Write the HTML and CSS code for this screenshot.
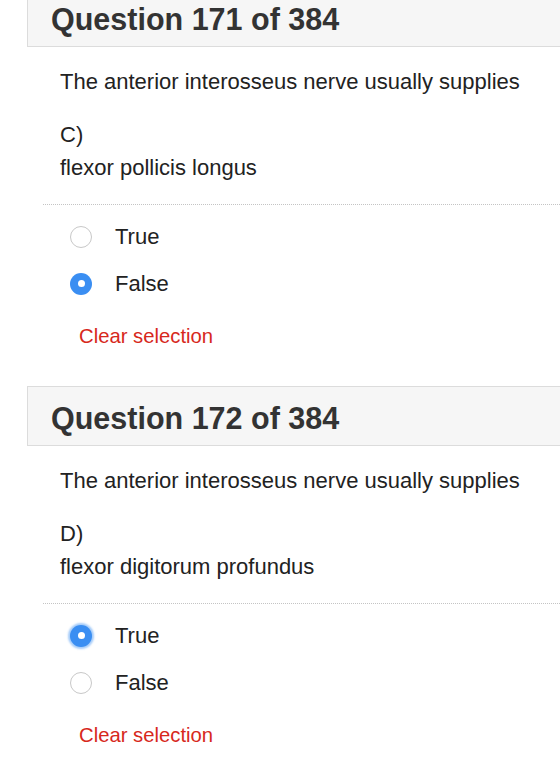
FILE: index.html
```html
<!DOCTYPE html>
<html lang="en">
<head>
<meta charset="utf-8">
<title>Quiz</title>
<link rel="stylesheet" href="styles.css">
</head>
<body>
<div class="page">
  <section class="question first">
    <header class="q-head"><h2>Question 171 of 384</h2></header>
    <div class="q-body">
      <p class="stem">The anterior interosseus nerve usually supplies</p>
      <p class="item">C)<br>flexor pollicis longus</p>
    </div>
    <div class="options">
      <div class="option"><span class="radio"></span><span class="label">True</span></div>
      <div class="option"><span class="radio checked"></span><span class="label">False</span></div>
    </div>
    <a class="clear">Clear selection</a>
  </section>
  <section class="question">
    <header class="q-head"><h2>Question 172 of 384</h2></header>
    <div class="q-body">
      <p class="stem">The anterior interosseus nerve usually supplies</p>
      <p class="item">D)<br>flexor digitorum profundus</p>
    </div>
    <div class="options">
      <div class="option"><span class="radio checked focus"></span><span class="label">True</span></div>
      <div class="option"><span class="radio"></span><span class="label">False</span></div>
    </div>
    <a class="clear">Clear selection</a>
  </section>
</div>
</body>
</html>
```
FILE: styles.css
```css
html, body {
  margin: 0;
  padding: 0;
  background: #fff;
}
body {
  font-family: "Liberation Sans", Arial, Helvetica, sans-serif;
  color: #222;
  overflow: hidden;
}
.page {
  padding-left: 27px;
  margin-right: -20px;
}
.question {
  height: 399px;
}
.question.first {
  margin-top: -13px;
}
.q-head {
  height: 58px;
  border: 1px solid #dcdcdc;
  background: #f6f6f6;
  display: flex;
  align-items: center;
  padding-left: 23px;
}
.q-head h2 {
  margin: 0;
  font-size: 30.5px;
  font-weight: bold;
  color: #333;
  line-height: 34px;
  position: relative;
  top: 2px;
}
.q-body {
  padding-left: 33px;
  font-size: 22px;
  line-height: 33px;
}
.q-body p {
  margin: 0;
}
.stem {
  padding-top: 18px;
}
.item {
  margin-top: 20px !important;
}
.options {
  margin-top: 20px;
  margin-left: 16px;
  border-top: 1px dotted #c4c4c4;
  padding-top: 8px;
}
.option {
  height: 47px;
  display: flex;
  align-items: center;
  padding-left: 27px;
  font-size: 22px;
}
.radio {
  width: 22px;
  height: 22px;
  box-sizing: border-box;
  border-radius: 50%;
  border: 1.5px solid #c8c8c8;
  background: #fff;
  margin-right: 23px;
  flex: none;
  display: flex;
  align-items: center;
  justify-content: center;
}
.radio.checked {
  border: none;
  background: #3a8ef2;
}
.radio.checked::after {
  content: "";
  width: 7px;
  height: 7px;
  border-radius: 50%;
  background: #fff;
}
.radio.focus {
  box-shadow: 0 0 2px 2px rgba(58, 142, 242, 0.45);
}
.clear {
  display: block;
  margin-top: 13px;
  padding-left: 52px;
  font-size: 20.3px;
  line-height: 33px;
  color: #d7281c;
}
```
